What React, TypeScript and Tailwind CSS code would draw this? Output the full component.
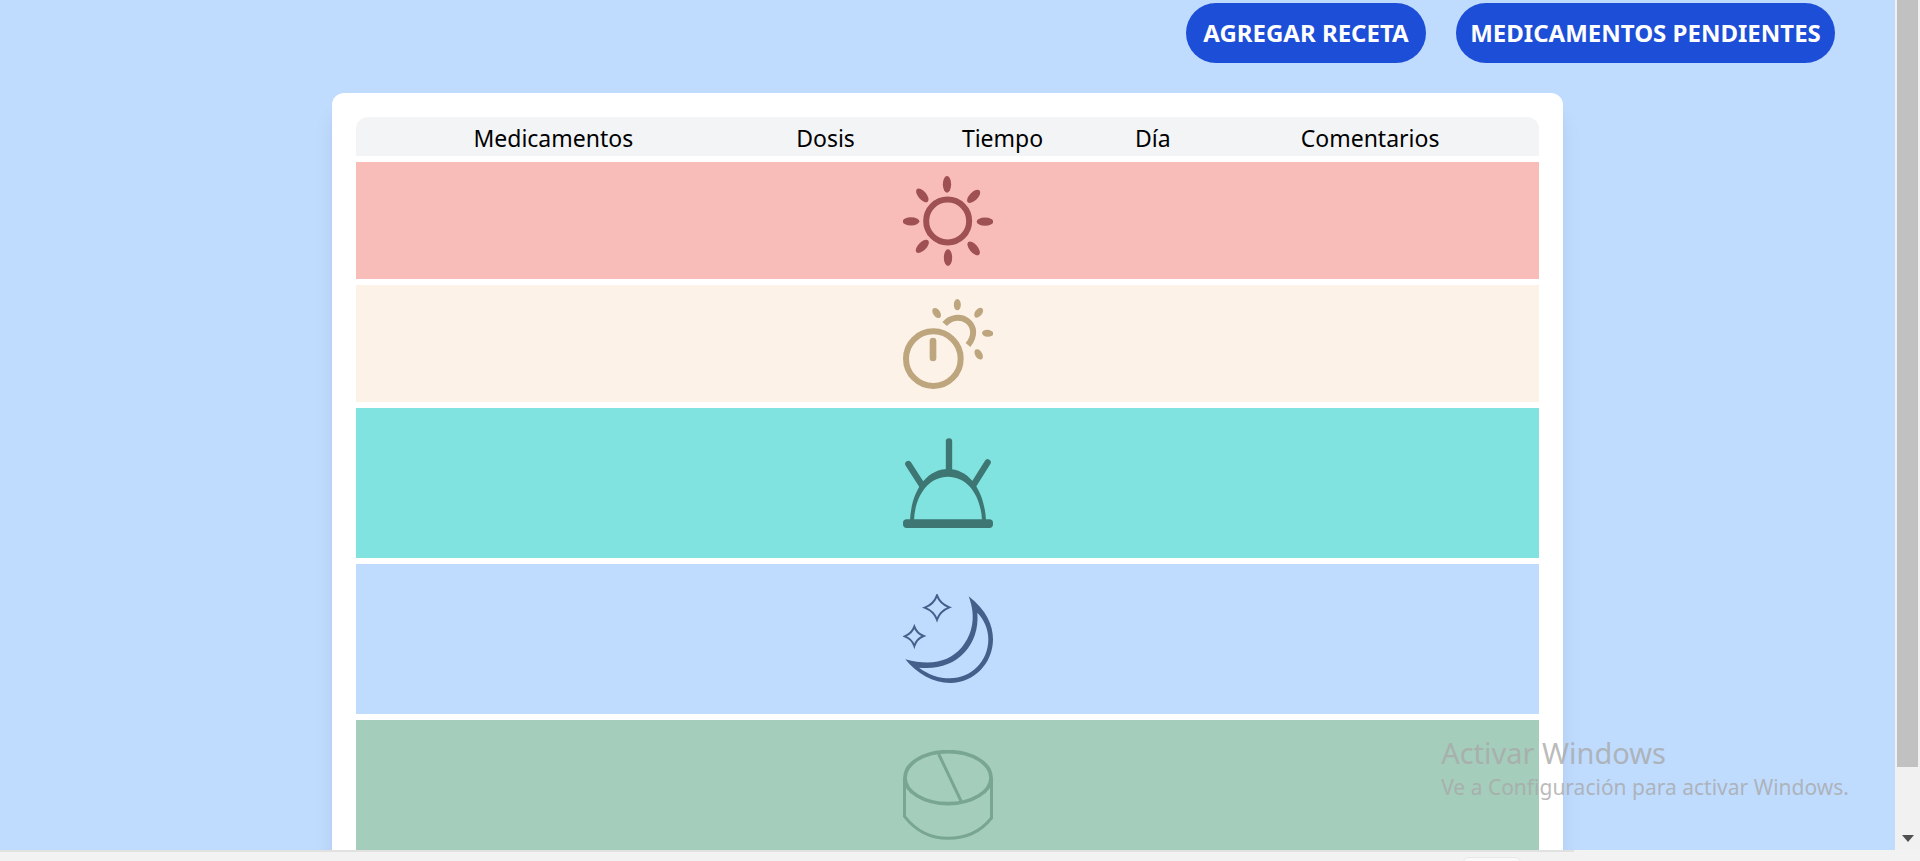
import type { ReactNode } from "react";

const icon = "mx-auto block size-[90px]";

function SunIcon() {
  const rays = [
    [168, 58, 0],
    [248, 94, 45],
    [282, 170, 90],
    [248, 250, 140],
    [171, 278, 0],
    [94, 244, 45],
    [60, 169, 90],
    [94, 91, 140],
  ];
  return (
    <svg viewBox="36 33 270 270" className={icon} role="img" aria-label="Mañana">
      <circle cx="170" cy="168" r="64.5" fill="none" stroke="#9f5052" strokeWidth="18" />
      {rays.map(([x, y, angle], i) => (
        <ellipse key={i} cx={x} cy={y} rx="12.5" ry="25" fill="#9f5052" transform={`rotate(${angle} ${x} ${y})`} />
      ))}
    </svg>
  );
}

function NoonIcon() {
  const rays = [
    [137, 75, 145],
    [199, 50, 0],
    [263, 74, 38],
    [290, 136, 94],
    [263, 199, 148],
  ];
  return (
    <svg viewBox="36 33 270 270" className={icon} role="img" aria-label="Mediodía">
      <circle cx="127" cy="212" r="82" fill="none" stroke="#bda67e" strokeWidth="18" />
      <rect x="116" y="149" width="20" height="71" rx="10" fill="#bda67e" />
      <path d="M161 108 C178 88 207 83 228 98 C251 115 253 144 231 171" fill="none" stroke="#bda67e" strokeWidth="18" />
      {rays.map(([x, y, angle], i) => (
        <ellipse key={i} cx={x} cy={y} rx="10.5" ry="17" fill="#bda67e" transform={`rotate(${angle} ${x} ${y})`} />
      ))}
    </svg>
  );
}

function SunsetIcon() {
  return (
    <svg viewBox="36 39 270 270" className={icon} role="img" aria-label="Tarde" fill="#3d7673">
      <path fillRule="evenodd" d="M57 286 C61 202 104 132 171 132 C238 132 281 202 285 286 L273 286 C270 211 229 155 171 155 C113 155 72 211 69 286 Z" />
      <rect x="36" y="283" width="270" height="26" rx="11" />
      <g fill="none" stroke="#3d7673" strokeWidth="19" strokeLinecap="round">
        <path d="M174 49 V140" />
        <path d="M52 117 L94 182" />
        <path d="M290 112 L248 179" />
      </g>
    </svg>
  );
}

function MoonIcon() {
  return (
    <svg viewBox="36 45 270 270" className={icon} role="img" aria-label="Noche" fill="#435f8a">
      <path
        fillRule="evenodd"
        d="M233 52 C287 94 306 139 306 181 C306 254 248 312 178 312 C126 312 78 284 43 241 C119 261 174 250 213 204 C245 165 256 112 233 52 Z M259 101 C263 150 248 190 221 220 C187 257 139 272 84 266 C112 287 144 298 177 298 C240 298 292 247 292 181 C292 151 280 122 259 101 Z"
      />
      <g fill="none" stroke="#435f8a" strokeWidth="6">
        <path d="M138 49 Q147 74 175 85 Q147 96 138 122 Q129 97 101 86 Q129 75 138 49 Z" />
        <path d="M70 143 Q77 163 98 171 Q77 179 70 201 Q63 180 41 172 Q63 163 70 143 Z" />
      </g>
    </svg>
  );
}

function PillIcon() {
  return (
    <svg viewBox="36 45 270 270" className={icon} role="img" aria-label="Otros">
      <g fill="none" stroke="#79a593" strokeWidth="9">
        <ellipse cx="171" cy="128" rx="129" ry="78" strokeWidth="11" />
        <path d="M40.500 128 V244 C74 287 119 310 171 310 C223 310 268 291 301.500 249 V128" />
        <path d="M143 57 L211 200" />
      </g>
    </svg>
  );
}

const periods: { className: string; art: ReactNode }[] = [
  { className: "h-[117px] bg-[#f9bdb9]", art: <SunIcon /> },
  { className: "h-[117px] bg-[#fdf2e8]", art: <NoonIcon /> },
  { className: "h-[150px] bg-[#80e3df]", art: <SunsetIcon /> },
  { className: "h-[150px] bg-[#bfdbfe]", art: <MoonIcon /> },
  { className: "h-[150px] bg-[#a4cdbb]", art: <PillIcon /> },
];

function ActionButton({ width, children }: { width: string; children: ReactNode }) {
  return (
    <button
      type="button"
      className={`h-[60px] rounded-full bg-[#1d4ed8] text-2xl font-bold whitespace-nowrap text-white ${width}`}
    >
      {children}
    </button>
  );
}

function Scrollbar() {
  return (
    <div aria-hidden="true" className="flex w-[25px] shrink-0 flex-col items-center bg-[#f1f1f1]">
      <div className="w-[21px] grow bg-[#c1c1c1]" />
      <div className="flex h-[83px] items-end pb-2">
        <svg viewBox="0 0 12 7" className="h-[7px] w-3">
          <path d="M0 0 H12 L6 7 Z" fill="#505050" />
        </svg>
      </div>
    </div>
  );
}

export default function App() {
  return (
    <div className="relative flex h-screen flex-col overflow-hidden bg-[#f2f2f2] font-['Noto_Sans','Open_Sans',sans-serif] text-black">
      <div className="flex min-h-0 grow">
        <main className="min-w-0 grow overflow-hidden bg-[#bfdbfe]">
          <div className="flex justify-end gap-[30px] pt-[3px] pr-[60px]">
            <ActionButton width="w-[240px]">AGREGAR RECETA</ActionButton>
            <ActionButton width="w-[379px]">MEDICAMENTOS PENDIENTES</ActionButton>
          </div>
          <section className="mx-auto mt-[30px] w-[65%] rounded-xl bg-white px-6 pt-[18px] pb-6 shadow-xl">
            <table className="w-full table-fixed border-separate border-spacing-x-0 border-spacing-y-[6px]">
              <colgroup>
                <col className="w-[33.4%]" />
                <col className="w-[12.6%]" />
                <col className="w-[17.3%]" />
                <col className="w-[8.1%]" />
                <col className="w-[28.6%]" />
              </colgroup>
              <thead>
                <tr className="h-[39px] text-[23px] leading-9 [&>th]:bg-gray-100 [&>th]:p-0 [&>th]:pt-[3px] [&>th]:font-normal">
                  <th className="rounded-tl-xl">Medicamentos</th>
                  <th>Dosis</th>
                  <th>Tiempo</th>
                  <th>Día</th>
                  <th className="rounded-tr-xl">Comentarios</th>
                </tr>
              </thead>
              <tbody>
                {periods.map((period, i) => (
                  <tr key={i}>
                    <td colSpan={5} className={`p-0 align-middle ${period.className}`}>
                      {period.art}
                    </td>
                  </tr>
                ))}
              </tbody>
            </table>
          </section>
        </main>
        <Scrollbar />
      </div>
      <footer className="h-[11px] shrink-0">
        <div className="h-[2px] w-[82%] bg-[#e1e1e1]" />
        <div className="mt-[5px] ml-[76.2%] h-4 w-[58px] rounded-md border border-[#e8e8e8] bg-[#f9f9f9]" />
      </footer>
      <div className="pointer-events-none absolute right-[71px] bottom-[58px] text-[#a9a9a9]/80">
        <p className="text-[29px] leading-9">Activar Windows</p>
        <p className="text-[21px] leading-8">Ve a Configuración para activar Windows.</p>
      </div>
    </div>
  );
}
